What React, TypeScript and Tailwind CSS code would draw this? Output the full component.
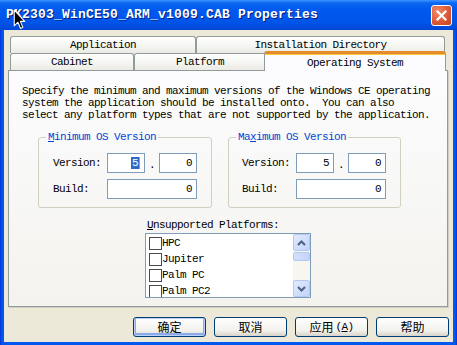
import React from "react";

const mono =
  "font-['Liberation_Mono','Noto_Sans_CJK_SC',monospace] text-[11px] tracking-[-0.6px] leading-[12px] text-black";

function Tab({ label, className }: { label: string; className: string }) {
  return (
    <div
      className={`flex items-center justify-center rounded-t-[3px] border border-b-0 border-[#919b9c] bg-[linear-gradient(to_bottom,#ffffff,#f4f4f0_60%,#ebeae4)] ${className}`}
    >
      {label}
    </div>
  );
}

function Field({ w, children }: { w: string; children?: React.ReactNode }) {
  return (
    <div
      className={`${w} h-[20px] border border-[#7f9db9] bg-white flex items-center justify-end pr-[4px]`}
    >
      {children}
    </div>
  );
}

function VersionBox({
  title,
  w,
  ml,
  pl,
  selected,
}: {
  title: React.ReactNode;
  w: string;
  ml: string;
  pl: string;
  selected?: boolean;
}) {
  return (
    <fieldset
      className={`${w} ${ml} border border-[#d0d0bf] rounded-[3px] pb-[8px]`}
    >
      <legend className="ml-[7px] px-[2px] text-[#0046d5]">{title}</legend>
      <div className={`${pl} pt-[10px] flex flex-col gap-[6px]`}>
        <div className="flex items-center">
          <span className="w-[54px]">Version:</span>
          <Field w="w-[38px]">
            {selected ? (
              <span className="bg-[#316ac5] text-white px-[1px] border-r border-[#e68b2c]">5</span>
            ) : (
              "5"
            )}
          </Field>
          <span className="w-[14px] text-center pt-[4px]">.</span>
          <Field w="w-[38px]">0</Field>
        </div>
        <div className="flex items-center">
          <span className="w-[54px]">Build:</span>
          <Field w="w-[90px]">0</Field>
        </div>
      </div>
    </fieldset>
  );
}

function ScrollBtn({ up }: { up?: boolean }) {
  return (
    <div className="w-[17px] h-[17px] rounded-[2px] border border-[#b5c8f0] bg-[linear-gradient(to_bottom_right,#e2ebfd,#c2d3fb)] flex items-center justify-center">
      <svg width="9" height="6" viewBox="0 0 9 6">
        <path
          d={up ? "M1 5 L4.5 1.5 L8 5" : "M1 1 L4.5 4.5 L8 1"}
          fill="none"
          stroke="#4d6185"
          strokeWidth="2"
        />
      </svg>
    </div>
  );
}

const platforms = ["HPC", "Jupiter", "Palm PC", "Palm PC2"];

export default function App() {
  return (
    <div className="relative w-[457px] h-[345px] flex flex-col bg-[linear-gradient(to_right,#0831d9,#0058ee_2px,#0058ee_calc(100%-2px),#0831d9)] overflow-hidden">
      {/* title bar */}
      <div className="h-[30px] shrink-0 flex items-center justify-between pl-[6px] pr-[5px] bg-[linear-gradient(to_bottom,#3d95ff_0%,#0a66f0_10%,#0058ee_35%,#0055e8_75%,#0046d5_100%)]">
        <span className="font-['Liberation_Mono',monospace] font-bold text-[13px] tracking-[0.2px] text-white [text-shadow:1px_1px_0_#0a1883]">
          PK2303_WinCE50_ARM_v1009.CAB Properties
        </span>
        <div className="w-[21px] h-[21px] rounded-[3px] border border-white bg-[radial-gradient(circle_at_30%_30%,#f08a6c,#dd5a36_55%,#c2401c)] flex items-center justify-center">
          <svg width="11" height="11" viewBox="0 0 11 11">
            <path d="M1.5 1.5 L9.5 9.5 M9.5 1.5 L1.5 9.5" stroke="white" strokeWidth="2.2" strokeLinecap="square" />
          </svg>
        </div>
      </div>

      {/* body */}
      <div className={`flex-1 mx-[4px] mb-[3px] bg-[#ece9d8] flex flex-col pl-[4px] pr-[5px] pt-[6px] ${mono}`}>
        <div className="flex px-[2px] h-[17px]">
          <Tab label="Application" className="w-[186px]" />
          <Tab label="Installation Directory" className="w-[249px]" />
        </div>
        <div className="flex items-end px-[2px] h-[17px]">
          <Tab label="Cabinet" className="w-[125px] h-[17px]" />
          <Tab label="Platform" className="w-[133px] h-[17px]" />
          <div className="relative z-10 -mb-px ml-[-2px] w-[182px] h-[20px] shrink-0 rounded-t-[3px] border border-b-0 border-[#919b9c] border-t-[3px] border-t-[#e68b2c] bg-[#fcfcfe] flex items-center justify-center shadow-[inset_0_1px_0_#ffc83c]">
            Operating System
          </div>
        </div>

        <div className="h-[237px] border border-[#919b9c] bg-[linear-gradient(to_bottom,#fcfcfe,#f4f3ee)] shadow-[1px_1px_0_#d0cec4] flex flex-col">
          <div className="pl-[13px] pt-[14px] whitespace-pre">
            <div>Specify the minimum and maximum versions of the Windows CE operating</div>
            <div>system the application should be installed onto.  You can also</div>
            <div>select any platform types that are not supported by the application.</div>
          </div>

          <div className="flex mt-[10px]">
            <VersionBox
              title={
                <>
                  <span className="underline">M</span>inimum OS Version
                </>
              }
              w="w-[174px]"
              ml="ml-[29px]"
              pl="pl-[14px]"
              selected
            />
            <VersionBox
              title={
                <>
                  Ma<span className="underline">x</span>imum OS Version
                </>
              }
              w="w-[173px]"
              ml="ml-[16px]"
              pl="pl-[13px]"
            />
          </div>

          <div className="self-center w-[166px] mt-[11px]">
            <div className="pl-[2px]">
              <span className="underline">U</span>nsupported Platforms:
            </div>
            <div className="mt-[2px] h-[65px] border border-[#7f9db9] bg-white flex">
              <div className="flex-1 pl-[3px] pt-[1px] overflow-hidden">
                {platforms.map((p) => (
                  <div key={p} className="h-[16px] flex items-center">
                    <span className="w-[13px] h-[13px] border border-[#4a4a4a] bg-white shrink-0" />
                    {p}
                  </div>
                ))}
              </div>
              <div className="w-[17px] bg-[#f7f6f1] flex flex-col">
                <ScrollBtn up />
                <div className="h-[9px] mt-[1px] rounded-[2px] border border-[#b5c8f0] bg-[linear-gradient(to_right,#d3e0fc,#c4d5fb)]" />
                <div className="flex-1" />
                <ScrollBtn />
              </div>
            </div>
          </div>
        </div>

        <div className="flex justify-end gap-[8px] mt-[10px] -mr-px font-['Noto_Sans_CJK_SC',sans-serif] text-[12px] tracking-normal">
          {["确定", "取消", "应用", "帮助"].map((b, i) => (
            <div
              key={b}
              className={`w-[73px] h-[20px] rounded-[3px] border border-[#003c74] bg-[linear-gradient(to_bottom,#ffffff,#f2f1ec_70%,#d8d3c8)] flex items-center justify-center leading-none ${
                i === 0 ? "shadow-[inset_0_0_0_1px_#b8d0f6,inset_0_-1px_0_2px_#8aaaec]" : ""
              }`}
            >
              {b}
              {b === "应用" && (
                <span className="font-['Liberation_Mono',monospace] text-[11px] tracking-[-0.6px] ml-[2px]">
                  (<span className="underline">A</span>)
                </span>
              )}
            </div>
          ))}
        </div>
      </div>

      {/* mouse pointer */}
      <svg className="absolute left-[13px] top-[9px]" width="13" height="21" viewBox="0 0 12 20">
        <path
          d="M1 1 L1 16 L4.5 12.6 L7 18.5 L9.2 17.5 L6.8 11.8 L11 11.8 Z"
          fill="black"
          stroke="white"
          strokeWidth="1"
          strokeLinejoin="round"
        />
      </svg>
    </div>
  );
}
